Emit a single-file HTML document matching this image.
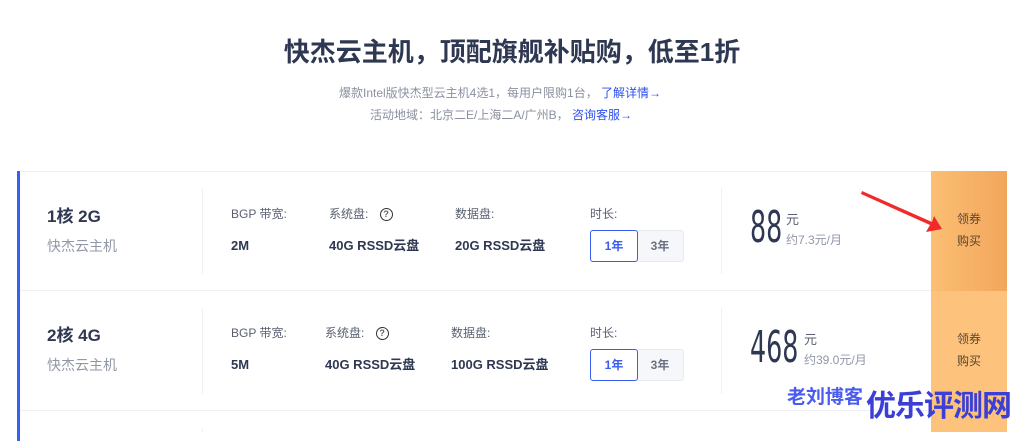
<!DOCTYPE html>
<html><head><meta charset="utf-8"><style>
*{margin:0;padding:0;box-sizing:border-box}
body{width:1024px;height:432px;overflow:hidden;background:#fff;font-family:"Liberation Sans","Noto Sans CJK SC",sans-serif;position:relative;color:#333b52}
.a{position:absolute;white-space:nowrap;line-height:18px}
h1{position:absolute;left:0;width:1024px;top:36px;text-align:center;font-size:26px;font-weight:bold;color:#2f3852;line-height:32px}
.sub{font-size:12px;color:#8a90a0;line-height:16px}
.sub b{font-weight:normal;color:#2c4ff0}
.card{position:absolute;left:17px;top:171px;width:990px;height:270px;border-top:1px solid #eef0f5}
.bl{position:absolute;left:17px;top:171px;width:3px;height:270px;background:#3660f2}
.row{position:absolute;left:20px;width:987px;height:120px;border-bottom:1px solid #eef0f5}
.nm{font-size:17px;font-weight:bold;color:#2f3852}
.gr{font-size:14px;color:#9097a6}
.lb{font-size:12px;color:#5a6070}
.vl{font-size:13px;font-weight:bold;color:#2f3852}
.vd{position:absolute;width:1px;background:#f0f1f5}
.b1{position:absolute;width:48px;height:32px;border:1px solid #3a5cf0;border-radius:3px;color:#3a5cf0;font-size:12px;text-align:center;line-height:30px;font-weight:bold;background:#fff;z-index:2}
.b3{position:absolute;width:48px;height:32px;border:1px solid #e8eaf0;border-radius:3px;background:#f6f7fa;color:#6a7080;font-size:12px;text-align:center;line-height:30px;font-weight:bold}
.pr{font-family:"DejaVu Sans Condensed","Liberation Sans Narrow",sans-serif;font-size:44px;line-height:44px;color:#2f3852;transform:scaleX(.64);transform-origin:left}
.or{position:absolute;left:931px;width:76px;height:120px;background:linear-gradient(90deg,#fcc072,#f5ad62);font-size:12px;color:#5a4530;text-align:center;line-height:22px;padding-top:37px}
.q{display:inline-block;width:13px;height:13px;border:1.3px solid #333;border-radius:50%;font-size:9px;text-align:center;line-height:11px;font-weight:bold;vertical-align:middle;margin-left:8px}
</style></head><body>
<h1>快杰云主机，顶配旗舰补贴购，低至1折</h1>
<div class="a sub" style="left:339px;top:85px">爆款Intel版快杰型云主机4选1，每用户限购1台， <b>了解详情→</b></div>
<div class="a sub" style="left:370px;top:107px">活动地域：北京二E/上海二A/广州B， <b>咨询客服→</b></div>
<div class="card"></div>
<div class="bl"></div>
<div class="row" style="top:171px"></div>
<div class="row" style="top:291px"></div>
<div class="or" style="top:171px;background:linear-gradient(90deg,#fbbf73,#f2a65c)">领券<br>购买</div>
<div class="or" style="top:291px;background:#fdc27c">领券<br>购买</div>
<div class="or" style="top:411px;height:21px;padding:0;background:#fdc27c"></div>

<div class="a nm" style="left:47px;top:208px">1核 2G</div>
<div class="a gr" style="left:47px;top:237px">快杰云主机</div>
<div class="vd" style="left:202px;top:188px;height:86px"></div>
<div class="a lb" style="left:231px;top:205px">BGP 带宽:</div>
<div class="a lb" style="left:329px;top:205px">系统盘: <span class="q">?</span></div>
<div class="a lb" style="left:455px;top:205px">数据盘:</div>
<div class="a lb" style="left:590px;top:205px">时长:</div>
<div class="a vl" style="left:231px;top:237px">2M</div>
<div class="a vl" style="left:329px;top:237px">40G RSSD云盘</div>
<div class="a vl" style="left:455px;top:237px">20G RSSD云盘</div>
<div class="b1" style="left:590px;top:230px">1年</div>
<div class="b3" style="left:636px;top:230px">3年</div>
<div class="vd" style="left:721px;top:188px;height:86px"></div>
<div class="a pr" style="left:750px;top:206px">88</div>
<div class="a lb" style="left:786px;top:211px;font-size:13px">元</div>
<div class="a gr" style="left:786px;top:231px;font-size:12px">约7.3元/月</div>

<div class="a nm" style="left:47px;top:327px">2核 4G</div>
<div class="a gr" style="left:47px;top:356px">快杰云主机</div>
<div class="vd" style="left:202px;top:308px;height:86px"></div>
<div class="a lb" style="left:231px;top:324px">BGP 带宽:</div>
<div class="a lb" style="left:325px;top:324px">系统盘: <span class="q">?</span></div>
<div class="a lb" style="left:451px;top:324px">数据盘:</div>
<div class="a lb" style="left:590px;top:324px">时长:</div>
<div class="a vl" style="left:231px;top:356px">5M</div>
<div class="a vl" style="left:325px;top:356px">40G RSSD云盘</div>
<div class="a vl" style="left:451px;top:356px">100G RSSD云盘</div>
<div class="b1" style="left:590px;top:349px">1年</div>
<div class="b3" style="left:636px;top:349px">3年</div>
<div class="vd" style="left:721px;top:308px;height:86px"></div>
<div class="a pr" style="left:750px;top:326px">468</div>
<div class="a lb" style="left:804px;top:331px;font-size:13px">元</div>
<div class="a gr" style="left:804px;top:351px;font-size:12px">约39.0元/月</div>
<div class="vd" style="left:202px;top:428px;height:4px"></div>

<svg class="a" style="left:0;top:0" width="1024" height="432">
<polygon points="862,191 932,222 934,216 942,229 926,232 930,225 861,194" fill="#f02a2a"/>
</svg>
<div class="a" style="left:787px;top:386px;font-size:19px;line-height:24px;font-weight:bold;color:#4a5cf0">老刘博客</div>
<div class="a" style="left:866px;top:389px;font-size:30px;line-height:36px;font-weight:bold;color:#3b3fd8;letter-spacing:-1px">优乐评测网</div>
</body></html>
